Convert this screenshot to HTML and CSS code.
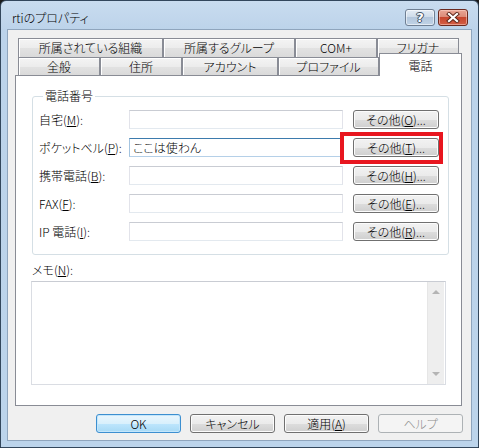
FILE: index.html
```html
<!DOCTYPE html>
<html lang="ja">
<head>
<meta charset="utf-8">
<title>rtiのプロパティ</title>
<link rel="stylesheet" href="styles.css">
</head>
<body>
<div class="window">
  <div class="titlebar">
    <span class="title">rtiのプロパティ</span>
    <div class="caption-buttons">
      <span class="cap-btn help-btn">?</span>
      <span class="cap-btn close-btn">
        <svg width="14" height="11" viewBox="0 0 14 11">
          <path d="M3 2 L11 9 M11 2 L3 9" stroke="#5a2418" stroke-width="4" stroke-linecap="square"/>
          <path d="M3 2 L11 9 M11 2 L3 9" stroke="#ffffff" stroke-width="2.2" stroke-linecap="square"/>
        </svg>
      </span>
    </div>
  </div>
  <div class="client">
    <div class="tabs">
      <div class="tab-row back-row">
        <div class="tab tab-org">所属されている組織</div>
        <div class="tab tab-group">所属するグループ</div>
        <div class="tab tab-com">COM+</div>
        <div class="tab tab-kana">フリガナ</div>
      </div>
      <div class="tab-row front-row">
        <div class="tab tab-general">全般</div>
        <div class="tab tab-address">住所</div>
        <div class="tab tab-account">アカウント</div>
        <div class="tab tab-profile">プロファイル</div>
        <div class="tab tab-phone selected">電話</div>
      </div>
    </div>
    <div class="panel">
      <fieldset class="group">
        <legend>電話番号</legend>
        <div class="phone-grid">
          <label class="row-label">自宅(<u>M</u>):</label>
          <input class="textbox" type="text" value="">
          <button class="btn">その他(<u>O</u>)...</button>

          <label class="row-label">ポケットベル(<u>P</u>):</label>
          <input class="textbox focused" type="text" value="ここは使わん">
          <button class="btn">その他(<u>T</u>)...</button>

          <label class="row-label">携帯電話(<u>B</u>):</label>
          <input class="textbox" type="text" value="">
          <button class="btn">その他(<u>H</u>)...</button>

          <label class="row-label">FAX(<u>F</u>):</label>
          <input class="textbox" type="text" value="">
          <button class="btn">その他(<u>E</u>)...</button>

          <label class="row-label">IP 電話(<u>I</u>):</label>
          <input class="textbox" type="text" value="">
          <button class="btn">その他(<u>R</u>)...</button>
        </div>
      </fieldset>
      <div class="memo-label">メモ(<u>N</u>):</div>
      <div class="memo">
        <div class="memo-text"></div>
        <div class="scrollbar">
          <span class="arrow-up"></span>
          <span class="arrow-down"></span>
        </div>
      </div>
    </div>
    <div class="dialog-buttons">
      <button class="btn dlg default">OK</button>
      <button class="btn dlg">キャンセル</button>
      <button class="btn dlg">適用(<u>A</u>)</button>
      <button class="btn dlg disabled">ヘルプ</button>
    </div>
  </div>
  <div class="highlight"></div>
</div>
</body>
</html>
```
FILE: styles.css
```css
* { box-sizing: border-box; }
html, body { margin: 0; padding: 0; }
body {
  width: 479px;
  height: 448px;
  overflow: hidden;
  background: #1b1b1b;
  font-family: "Noto Sans CJK JP", "Noto Sans", sans-serif;
  font-size: 12px;
  font-weight: 300;
  color: #000;
  font-feature-settings: "palt";
}
.window {
  position: relative;
  width: 479px;
  height: 448px;
  border: 1px solid #33475c;
  border-radius: 6px 6px 0 0;
  background: linear-gradient(to bottom, #c9dcef 0px, #bcd3ea 29px, #bcd4eb 100%);
  padding: 0 6px 6px;
  display: flex;
  flex-direction: column;
}
.titlebar {
  height: 28px;
  flex: none;
  display: flex;
  justify-content: space-between;
  align-items: flex-start;
  padding: 0 4px 0 5px;
}
.title {
  margin-top: 10px;
  line-height: 14px;
  font-size: 12px;
}
.caption-buttons {
  margin-top: 8px;
  display: flex;
  gap: 3px;
}
.cap-btn {
  width: 30px;
  height: 17px;
  border-radius: 3px;
  display: flex;
  align-items: center;
  justify-content: center;
}
.help-btn {
  border: 1px solid #6f7f93;
  background: linear-gradient(to bottom, #e4ecf5 0%, #cfdcea 45%, #b4c7dc 50%, #bfd2e6 100%);
  box-shadow: inset 0 0 0 1px rgba(255,255,255,0.55);
  color: #fff;
  font-family: "DejaVu Sans", sans-serif;
  font-weight: bold;
  font-size: 13px;
  line-height: 15px;
  text-shadow: 0 0 1px #3a4a5e, 0 0 1px #3a4a5e, 1px 0 0 #4a5a6e, -1px 0 0 #4a5a6e, 0 1px 0 #4a5a6e, 0 -1px 0 #4a5a6e;
}
.close-btn {
  border: 1px solid #6b2a1f;
  background: linear-gradient(to bottom, #e9a696 0%, #dc8b78 45%, #c7462e 50%, #d35f45 100%);
  box-shadow: inset 0 0 0 1px rgba(255,220,210,0.5);
}
.client {
  flex: 1;
  border: 1px solid #8fa5bd;
  background: #f0f0f0;
  display: flex;
  flex-direction: column;
}
.tabs {
  margin: 8px 0 0 10px;
  display: flex;
  flex-direction: column;
}
.tab-row { display: flex; }
.tab {
  border: 1px solid #898c95;
  border-bottom: none;
  background: linear-gradient(to bottom, #f4f4f4 0%, #ececec 50%, #e2e2e2 51%, #dadada 100%);
  box-shadow: inset 1px 1px 0 #ffffff;
  display: flex;
  align-items: center;
  justify-content: center;
  line-height: 14px;
}
.back-row .tab { height: 19px; }
.front-row .tab { height: 18px; }
.tab-org { width: 145px; }
.tab-group { width: 132px; }
.tab-com { width: 82px; }
.tab-kana { width: 82px; }
.tab-general { width: 82px; }
.tab-address { width: 82px; }
.tab-account { width: 96px; }
.tab-profile { width: 101px; }
.tab-phone { width: 83px; }
.front-row .tab.selected {
  height: 23px;
  margin-top: -4px;
  margin-bottom: -1px;
  background: #ffffff;
  box-shadow: none;
  position: relative;
  z-index: 1;
  padding-top: 1px;
}
.panel {
  margin-left: 7px;
  width: 447px;
  height: 331px;
  border: 1px solid #898c95;
  background: #ffffff;
  display: flex;
  flex-direction: column;
}
.group {
  margin: 13px 12px 0 16px;
  padding: 7px 9px 13px 6px;
  border: 1px solid #d5dfe5;
  border-radius: 3px;
  min-width: 0;
}
.group legend {
  margin-left: 4px;
  padding: 0 2px;
  line-height: 14px;
  height: 14px;
}
.phone-grid {
  display: grid;
  grid-template-columns: 90px 214px 86px;
  grid-auto-rows: 19px;
  column-gap: 0;
  row-gap: 9px;
  align-items: center;
}
.phone-grid .btn { margin-left: 10px; }
.row-label {
  line-height: 14px;
  white-space: nowrap;
}
.textbox {
  appearance: none;
  width: 214px;
  height: 19px;
  margin: 0;
  padding: 0 3px;
  font: inherit;
  font-feature-settings: "palt";
  color: #000;
  background: #ffffff;
  border: 1px solid #e2e3ea;
  border-top-color: #c9ccd3;
  border-bottom-color: #e3e9ef;
  border-radius: 0;
  outline: none;
}
.textbox.focused {
  border-color: #b5d0e8;
  border-top-color: #3d7bad;
  border-left-color: #a4c4e0;
}
.btn {
  appearance: none;
  width: 86px;
  height: 19px;
  margin: 0;
  padding: 0;
  font: inherit;
  font-feature-settings: "palt";
  color: #000;
  line-height: 14px;
  border: 1px solid #707070;
  border-radius: 3px;
  background: linear-gradient(to bottom, #f2f2f2 0%, #ebebeb 50%, #dddddd 51%, #cfcfcf 100%);
  box-shadow: inset 0 0 0 1px #fcfcfc;
  text-align: center;
}
.memo-label {
  margin: 8px 0 0 16px;
  line-height: 14px;
  height: 14px;
}
.memo {
  margin: 4px 0 0 15px;
  width: 415px;
  height: 104px;
  border: 1px solid #dadde3;
  border-top-color: #c9ccd3;
  display: flex;
}
.memo-text { flex: 1; background: #fff; }
.scrollbar {
  width: 17px;
  margin-right: 1px;
  background: #eeeeee;
  border-left: 1px solid #e6e6e6;
  display: flex;
  flex-direction: column;
  justify-content: space-between;
  align-items: center;
  padding: 8px 0 8px;
}
.arrow-up, .arrow-down {
  width: 0;
  height: 0;
  border-left: 4px solid transparent;
  border-right: 4px solid transparent;
}
.arrow-up { border-bottom: 4px solid #b4b4b4; }
.arrow-down { border-top: 4px solid #b4b4b4; }
.dialog-buttons {
  margin-top: 8px;
  padding-right: 8px;
  display: flex;
  justify-content: flex-end;
  gap: 9px;
}
.btn.dlg { width: 85px; }
.btn.default {
  border-color: #3c8fd0;
  background: linear-gradient(to bottom, #eaf6fd 0%, #d9f0fc 50%, #bee6fd 51%, #a7d9f5 100%);
  box-shadow: inset 0 0 0 1px #c4e6fb;
}
.btn.disabled {
  border-color: #adb2b5;
  background: #f4f4f4;
  box-shadow: none;
  color: #8d8d8d;
}
.highlight {
  position: absolute;
  left: 339px;
  top: 131px;
  width: 103px;
  height: 32px;
  border: 4px solid #e8161f;
  pointer-events: none;
}
```
